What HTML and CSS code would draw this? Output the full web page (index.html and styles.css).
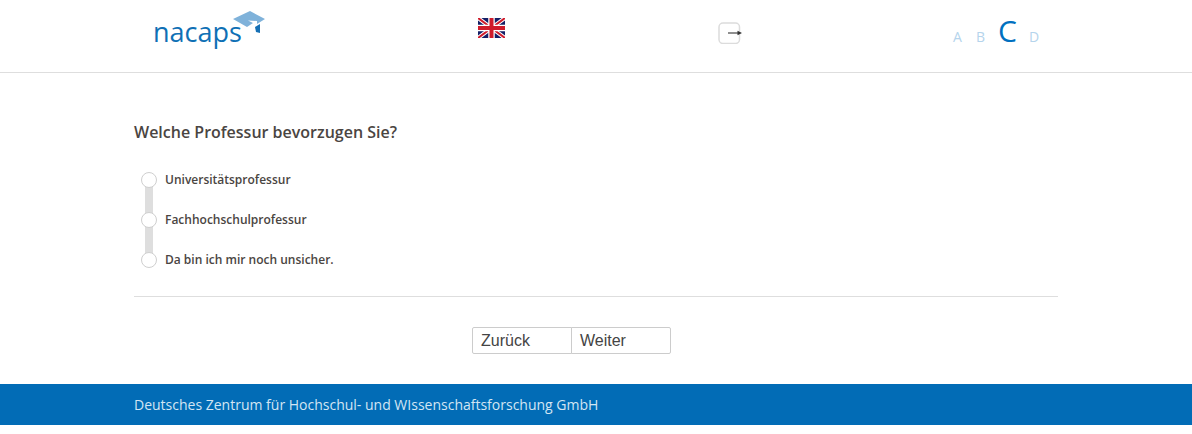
FILE: index.html
```html
<!DOCTYPE html>
<html lang="de">
<head>
  <meta charset="UTF-8" />
  <title>nacaps</title>
  <link rel="stylesheet" href="styles.css">
</head>
<body>
  <header class="top">
    <div class="logo">
      <span class="logo-text">nacaps</span>
      <svg class="logo-cap" width="36" height="26" viewBox="0 0 36 26">
        <path d="M1 10 L18 2 L33 10 L25 15 L25 12 L16 11.500 L21 14 L15 18 Z" fill="#7fb2da"/>
        <path d="M23 18 L28 15 L28 24 L24 23 Z" fill="#1670b5"/>
      </svg>
    </div>
    <a class="flag" href="#">
      <svg width="27" height="20" viewBox="0 0 27 20">
        <rect width="27" height="20" fill="#141f66"/>
        <path d="M0 0 L27 20 M27 0 L0 20" stroke="#fff" stroke-width="4"/>
        <path d="M0 0 L27 20 M27 0 L0 20" stroke="#cf1b2b" stroke-width="2"/>
        <path d="M13.5 0 V20 M0 10 H27" stroke="#fff" stroke-width="6.5"/>
        <path d="M13.5 0 V20 M0 10 H27" stroke="#cf1b2b" stroke-width="4"/>
      </svg>
    </a>
    <a class="logout" href="#">
      <svg width="24" height="22" viewBox="0 0 24 22">
        <rect x="1" y="1" width="20.5" height="20.5" rx="4" fill="#fff" stroke="#dcdcdc" stroke-width="1.5"/>
        <path d="M10 11 H21" stroke="#444" stroke-width="1.2"/>
        <path d="M24 11 L19.5 8.800 V13.200 Z" fill="#333"/>
      </svg>
    </a>
    <div class="sizes">
      <a class="size" href="#">A</a>
      <a class="size" href="#">B</a>
      <a class="size current" href="#">C</a>
      <a class="size" href="#">D</a>
    </div>
  </header>

  <main class="content">
    <h1 class="question">Welche Professur bevorzugen Sie?</h1>

    <div class="answers">
      <label class="answer"><span class="dot"></span>Universitätsprofessur</label>
      <label class="answer"><span class="dot"></span>Fachhochschulprofessur</label>
      <label class="answer"><span class="dot"></span>Da bin ich mir noch unsicher.</label>
    </div>

    <div class="buttons">
      <button class="btn">Zurück</button>
      <button class="btn">Weiter</button>
    </div>
  </main>

  <footer class="bottom">
    <p>Deutsches Zentrum für Hochschul- und WIssenschaftsforschung GmbH</p>
  </footer>
</body>
</html>
```

FILE: styles.css
```css
:root {
  --blue: #026cb6;
  --text: #4a4542;
  --line: #dedede;
}
* { box-sizing: border-box; margin: 0; padding: 0; }
body {
  font-family: 'Open Sans', sans-serif;
  background: #fff;
  color: var(--text);
}
a { text-decoration: none; }

.top {
  display: grid;
  grid-template-columns: 324px 240px 234px 1fr;
  height: 73px;
  padding-left: 154px;
  border-bottom: 1px solid var(--line);
}
.logo {
  display: flex;
  align-items: flex-start;
  padding-top: 9px;
}
.logo-text {
  margin-top: 4px;
  margin-left: -1px;
  font-size: 27px;
  line-height: 38px;
  color: #0f70b5;
}
.logo-cap { margin-left: -10px; }
.flag { padding-top: 18px; }
.flag svg, .logout svg { display: block; }
.logout { padding-top: 22px; }
.sizes {
  display: flex;
  align-items: baseline;
  height: 72px;
  padding: 12px 0 0 1px;
}
.size {
  width: 23px;
  font-size: 14px;
  color: #b5d4ec;
}
.size.current {
  width: 31px;
  margin-left: -1px;
  font-size: 30px;
  line-height: 38px;
  color: #0070c0;
}

.content {
  width: 924px;
  margin-left: 134px;
}
.question {
  padding-top: 49px;
  font-size: 16px;
  line-height: 20px;
  font-weight: 600;
}
.answers {
  position: relative;
  margin-top: 17px;
  padding-bottom: 17px;
  border-bottom: 1px solid var(--line);
}
.answers::before {
  content: '';
  position: absolute;
  left: 11px;
  top: 20px;
  width: 8px;
  height: 80px;
  background: var(--line);
}
.answer {
  position: relative;
  display: flex;
  align-items: center;
  height: 40px;
  padding-left: 7px;
  font-size: 12px;
  font-weight: 600;
}
.dot {
  width: 16px;
  height: 16px;
  margin: 1px 8px 0 0;
  border: 1px solid #cfcfcf;
  border-radius: 50%;
  background: #fff;
}

.buttons {
  display: flex;
  margin-top: 30px;
  padding-left: 338px;
}
.btn {
  width: 100px;
  height: 27px;
  padding: 0 8px;
  font-family: 'Liberation Sans', sans-serif;
  font-size: 16px;
  text-align: left;
  color: #444;
  background: #fff;
  border: 1px solid #ccc;
  border-radius: 2px 0 0 2px;
}
.btn + .btn {
  margin-left: -1px;
  border-radius: 0 2px 2px 0;
}

.bottom {
  height: 41px;
  margin-top: 30px;
  padding-left: 134px;
  background: var(--blue);
  color: #d3e5f3;
  font-size: 14px;
  line-height: 41px;
}
```
